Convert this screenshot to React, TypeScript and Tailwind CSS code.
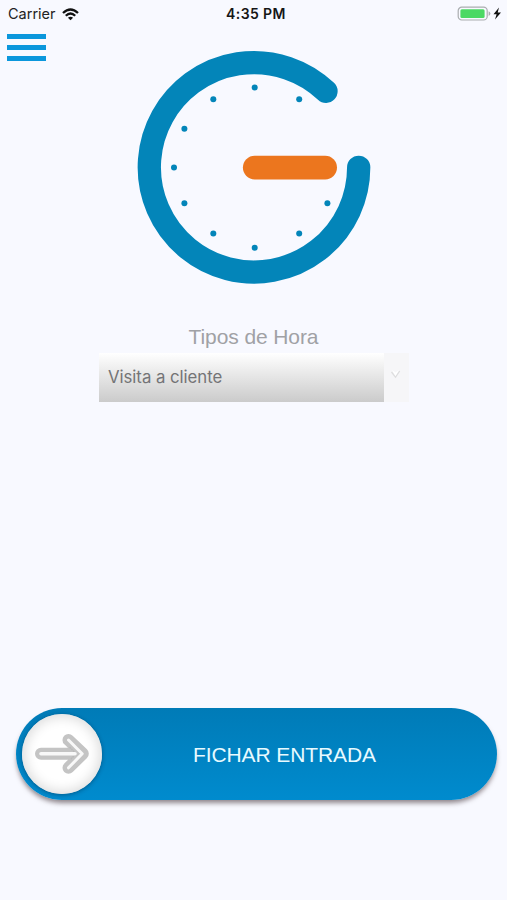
import React from 'react';

const ticks = [
  [254.7, 87.5],
  [299.2, 99.3],
  [213.3, 99.3],
  [184.4, 128.8],
  [174, 167.6],
  [184.4, 203.3],
  [213.3, 233.6],
  [254.7, 247.7],
  [299.2, 233.6],
  [327.4, 203.3]
];

const StatusBar = () => (
  <div className="grid h-[28px] grid-cols-3 items-center pl-[8px] pr-[5px] text-black">
    <div className="flex items-center">
      <span className="w-[48px] whitespace-nowrap text-[14.5px] leading-[28px] text-[#222]">Carrier</span>
      <svg className="ml-[6px] h-[13px] w-[17px]" viewBox="0 0 17 13" fill="none" stroke="#111" strokeWidth="2.3">
        <path d="M1 5 Q8.5 -2 16 5" />
        <path d="M3.8 7.8 Q8.5 3.2 13.2 7.8" />
        <path d="M8.5 12.3 L5.9 9.7 Q8.5 7.6 11.1 9.7 Z" fill="#111" stroke="none" />
      </svg>
    </div>
    <span className="pl-[2px] text-center text-[14px] font-semibold leading-[28px] tracking-[0.4px] text-[#161616]">4:35 PM</span>
    <div className="flex items-center justify-end">
      <svg className="h-[16px] w-[45px]" viewBox="0 0 45 16">
        <rect x="1.2" y="1.2" width="29" height="12.8" rx="3.6" fill="none" stroke="#aaadb0" strokeWidth="1.2" />
        <rect x="3.4" y="3.2" width="24.2" height="8.8" rx="1.5" fill="#4bd964" />
        <path d="M31.6 5.2 Q33.4 6.2 33.4 7.5 Q33.4 9 31.6 10 Z" fill="#aaadb0" />
        <path d="M42 1.4 L36.5 8.3 H39.6 L38 13.4 L44 6.4 H40.7 Z" fill="#111" />
      </svg>
    </div>
  </div>
);

const ClockLogo = () => (
  <svg className="mx-auto h-[234px] w-[234px]" viewBox="137 50 234 234">
    <path d="M326 91.3 A104.7 104.7 0 1 0 358.7 167.3" fill="none" stroke="#0385b9" strokeWidth="23.3" strokeLinecap="round" />
    {ticks.map(([x, y]) => (
      <circle key={`${x}-${y}`} cx={x} cy={y} r="3" fill="#0385b9" />
    ))}
    <path d="M254.7 167.6 H325.2" stroke="#ec761e" strokeWidth="23.6" strokeLinecap="round" />
  </svg>
);

export default function App() {
  return (
    <div className="flex h-[900px] w-[507px] flex-col overflow-hidden bg-[#f8f9ff] font-[Inter,sans-serif]">
      <StatusBar />

      {/* Menu */}
      <button aria-label="Menu" className="mt-[6px] ml-[7px] flex h-[27px] w-[39px] flex-col justify-between">
        <span className="h-[5px] w-full bg-[#0b97dc]" />
        <span className="h-[5px] w-full bg-[#0b97dc]" />
        <span className="h-[5px] w-full bg-[#0b97dc]" />
      </button>

      <div className="-mt-[11px] pl-px">
        <ClockLogo />
      </div>

      {/* Hour type */}
      <div className="mt-[40px] flex flex-col items-center">
        <label className="font-['Liberation_Sans',sans-serif] text-[21px] leading-[26px] tracking-[-0.1px] text-[#a0a1a5]">Tipos de Hora</label>
        <div className="mt-[3px] ml-px flex h-[49px] w-[310px]">
          <div className="flex w-[285px] items-center bg-linear-to-b from-white to-[#cbcbcb] pl-[9px] text-[#747476]">
            <span className="text-[16.8px] tracking-[-0.05px]">Visita a cliente</span>
          </div>
          <div className="flex w-[25px] justify-center bg-[#f6f6f8] pt-[15px] pr-px">
            <svg className="h-[11px] w-[12px]" viewBox="0 0 12 11">
              <path d="M1.5 4 L5.5 9.2 L9.7 3" fill="none" stroke="#dededf" strokeWidth="1.3" />
              <path d="M2 2 L5.5 8 L9 2 L5.5 4.5 Z" fill="#fff" />
            </svg>
          </div>
        </div>
      </div>

      {/* Slide to clock in */}
      <div className="mt-[306px] mr-[10px] ml-[16px] flex h-[92px] shrink-0 items-center rounded-full bg-linear-to-b from-[#007bb7] to-[#008bce] pl-[6px] shadow-[0_4px_5px_-1px_rgba(70,55,60,0.6)]">
        <div className="flex size-[80px] items-center justify-center rounded-full bg-white shadow-[inset_0_0_12px_3px_#dedede,0_1px_4px_rgba(0,30,60,0.45)]">
          <svg className="size-[60px]" viewBox="32 724 60 60" fill="none" strokeLinecap="round" strokeLinejoin="round">
            <path d="M41 753.7 H82 M68.5 740 L82.8 753.7 L68.5 767.8" stroke="#c4c4c4" strokeWidth="12" />
            <path d="M68.5 740 L82.2 753.7 L68.5 767.8" stroke="#f8f8f8" strokeWidth="3" />
            <path d="M70 747.5 L76 753.7 L70 760" stroke="#b9b9b9" strokeWidth="1.5" strokeDasharray="0.5 2" />
            <path d="M41 753.7 H75" stroke="#f8f8f8" strokeWidth="3.6" />
          </svg>
        </div>
        <span className="ml-[91px] pt-[1px] font-['Liberation_Sans',sans-serif] text-[21px] tracking-[-0.1px] text-[#e8faff]">FICHAR ENTRADA</span>
      </div>
    </div>
  );
}
